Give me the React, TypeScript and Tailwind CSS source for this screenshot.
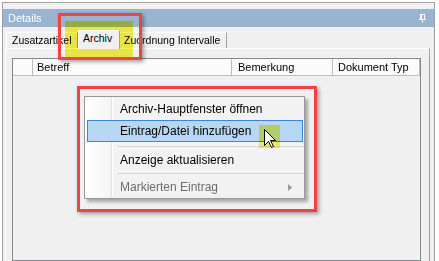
export default function App() {
  const columns = [
    { label: "", className: "w-[20px]" },
    { label: "Betreff", className: "w-[199px] pl-[4px]" },
    { label: "Bemerkung", className: "w-[101px] pl-[6px]" },
    { label: "Dokument Typ", className: "flex-1 pl-[5px]" },
  ];

  return (
    <div className="relative h-[261px] w-[439px] overflow-hidden bg-white font-['Liberation_Sans',Arial,sans-serif] text-black">
      {/* Docked "Details" panel */}
      <div className="ml-[2px] mt-[2px] flex h-[259px] w-[433px] flex-col border-l border-r border-t border-[#a0a0a0] bg-[#f0f0f0]">
        <div className="mt-[6px] flex h-[18px] items-center justify-between bg-[#99b4d1] pl-[5px] pr-[8px] text-[11px] text-white">
          <span>Details</span>
          <svg width="7" height="9" viewBox="0 0 7 9">
            <rect x="1" y="0" width="2" height="5" fill="white" />
            <rect x="1.5" y="0.5" width="4" height="5" fill="none" stroke="white" />
            <rect x="0" y="5" width="7" height="1" fill="white" />
            <rect x="3" y="6" width="1" height="3" fill="white" />
          </svg>
        </div>

        {/* Tabs */}
        <div className="flex h-[21px] items-end pl-[3px] text-[10.5px]">
          <div className="flex h-[16px] w-[72px] items-center border-l border-t border-r border-l-white border-t-white border-r-[#a0a0a0] pl-[5px]">
            Zusatzartikel
          </div>
          <div className="relative z-10 -mb-px flex h-[19px] w-[42px] items-center border-l border-t border-r border-l-white border-t-white border-r-[#a0a0a0] bg-[#f0f0f0] pl-[4px] pb-[2px]">
            Archiv
          </div>
          <div className="flex h-[16px] w-[107px] items-center border-t border-r border-t-white border-r-[#a0a0a0] pl-[4px]">
            Zuordnung Intervalle
          </div>
        </div>

        {/* Tab page */}
        <div className="ml-[2px] mr-[4px] flex-1 border-l border-r border-t border-l-white border-r-[#a0a0a0] border-t-white pl-[6px] pt-[9px]">
          <div className="h-full w-[409px] border border-[#828790] bg-[#f0f0f0]">
            <div className="flex h-[17px] bg-[#fbfbfb] text-[11px]">
              {columns.map((c, i) => (
                <div
                  key={i}
                  className={`flex items-center border-b border-r border-[#bdbdbd] ${c.className}`}
                >
                  {c.label}
                </div>
              ))}
            </div>
          </div>
        </div>
      </div>

      {/* Highlight on the Archiv tab */}
      <div className="absolute left-[65px] top-[21px] h-[37px] w-[68px] bg-[#f7f24a] mix-blend-multiply" />
      <div className="absolute left-[58px] top-[13px] h-[47px] w-[84px] border-[3px] border-[#f04444] shadow-[2px_2px_4px_rgba(0,0,0,0.35)]" />

      {/* Context menu */}
      <div className="absolute left-[77px] top-[86px] h-[126px] w-[240px] border-[3px] border-[#f04444] shadow-[2px_2px_4px_rgba(0,0,0,0.35)]" />
      <div className="absolute left-[84px] top-[96px] flex h-[103px] w-[221px] flex-col border border-[#979797] bg-[linear-gradient(to_right,#ffffff_0px,#f4f4f4_26px,#e2e3e3_26px,#e2e3e3_27px,#ffffff_27px,#ffffff_28px,#f2f2f2_28px)] pt-[1px] text-[12px] shadow-[3px_3px_3px_rgba(0,0,0,0.3)]">
        <div className="flex h-[22px] items-center pl-[35px]">Archiv-Hauptfenster öffnen</div>
        <div className="ml-[2px] mr-[1px] flex h-[22px] items-center border border-[#3a87d9] bg-[#b7d6f3] pl-[32px]">
          Eintrag/Datei hinzufügen
        </div>
        <div className="flex h-[8px] items-center pl-[32px]">
          <div className="h-px w-full bg-[#d7d7d7]" />
        </div>
        <div className="flex h-[20px] items-center pl-[35px]">Anzeige aktualisieren</div>
        <div className="flex h-[6px] items-center pl-[32px]">
          <div className="h-px w-full bg-[#d7d7d7]" />
        </div>
        <div className="flex h-[22px] items-center justify-between pl-[35px] pr-[12px] text-[#6d6d6d]">
          <span>Markierten Eintrag</span>
          <svg width="4" height="7" viewBox="0 0 4 7">
            <path d="M0 0 L4 3.5 L0 7 Z" fill="#9a9a9a" />
          </svg>
        </div>
      </div>

      {/* Cursor with highlight */}
      <div className="absolute left-[259px] top-[125px] h-[23px] w-[21px] bg-[#f7f24a] opacity-80 mix-blend-multiply" />
      <svg className="absolute left-[264px] top-[129px]" width="13" height="20" viewBox="0 0 13 20">
        <path
          d="M0.5 0.5 L0.5 16.5 L4.5 12.5 L7.5 18.5 L9.5 17.5 L6.5 11.5 L11.5 11.5 Z"
          fill="white"
          stroke="black"
          strokeWidth="1"
          strokeLinejoin="miter"
        />
      </svg>
    </div>
  );
}
